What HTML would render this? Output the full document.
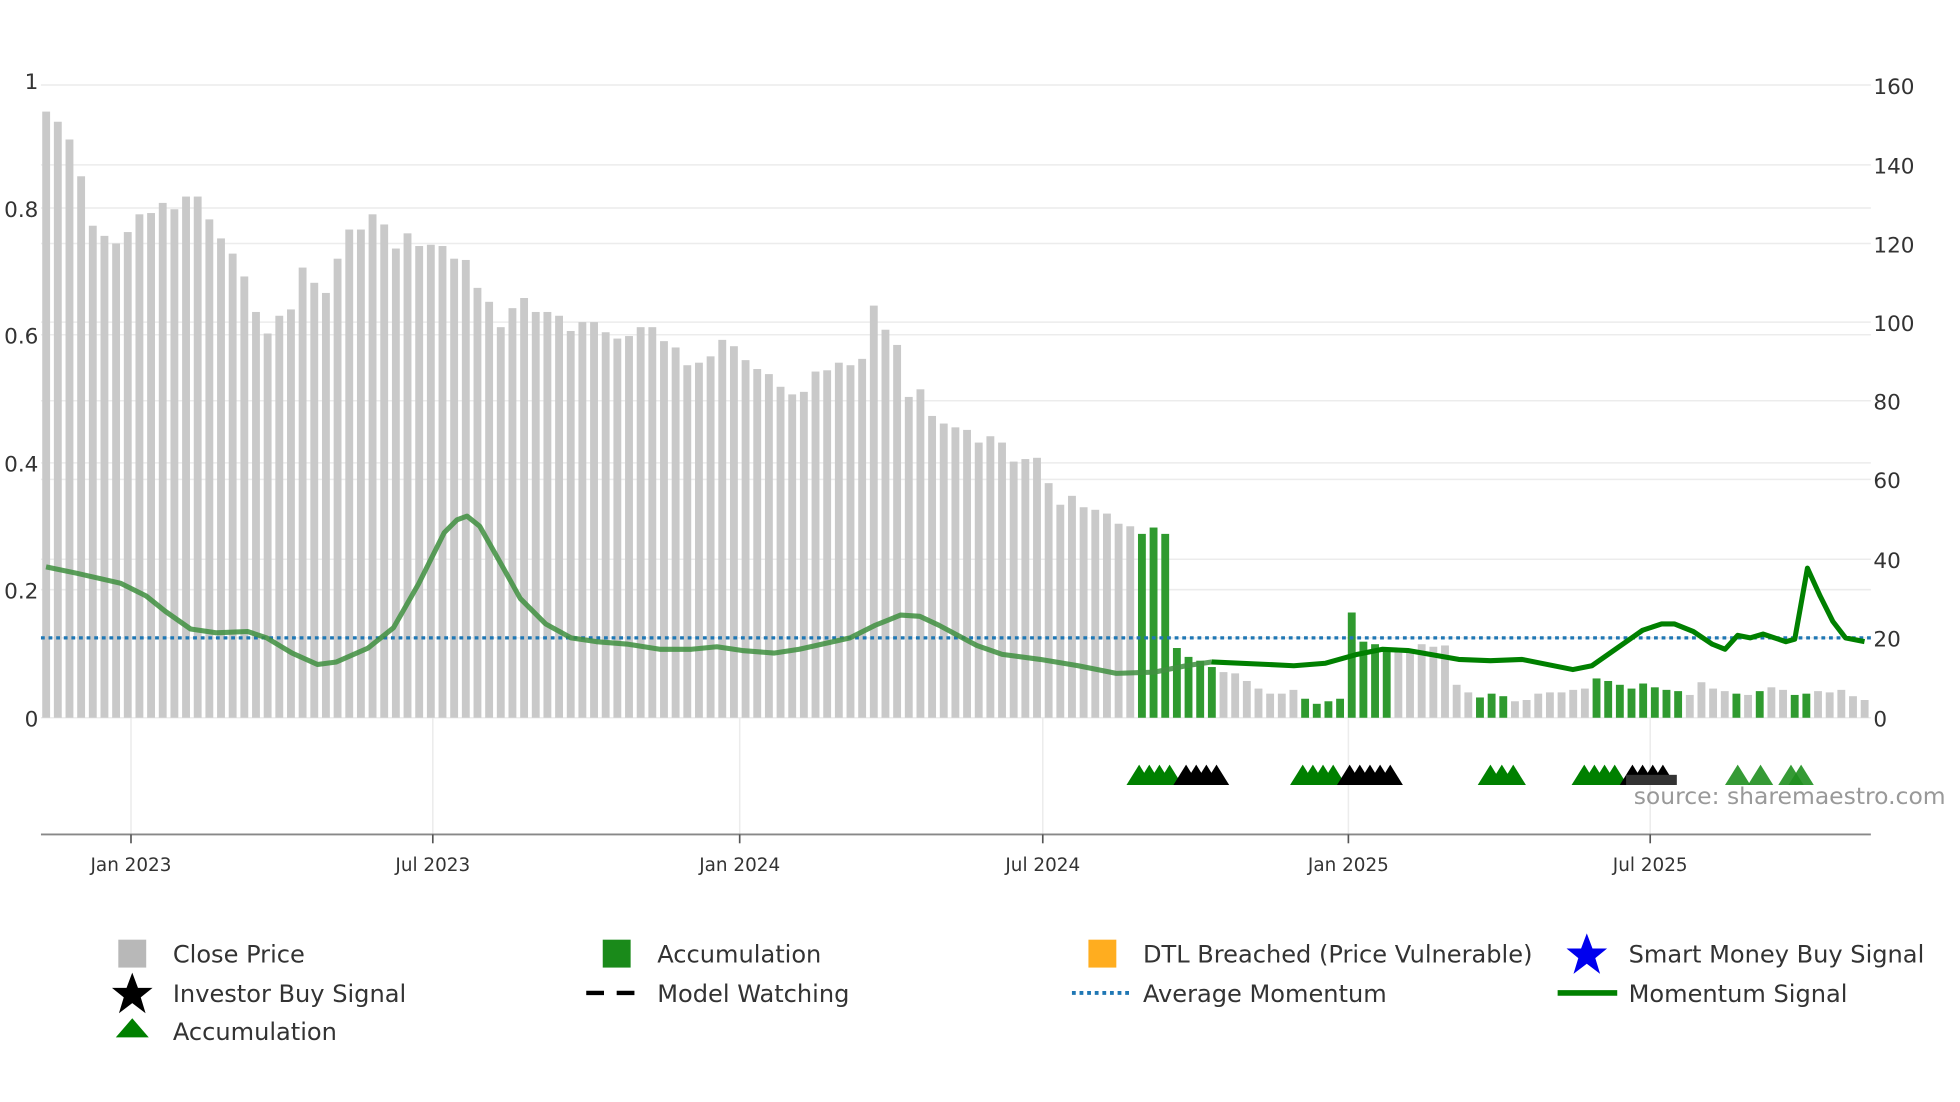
<!DOCTYPE html>
<html><head><meta charset="utf-8">
<style>
html,body{margin:0;padding:0;background:#fff;}
svg{display:block;}
text{font-family:"DejaVu Sans","Liberation Sans",sans-serif;}
</style></head>
<body>
<svg id="c" width="1960" height="1102" viewBox="0 0 1545 869" xmlns="http://www.w3.org/2000/svg">
<rect width="1545" height="869" fill="#fff"/>
<g id="grid" stroke="#ececec" stroke-width="1.2"></g>
<g id="bars"></g>
<line x1="32" y1="503" x2="1475" y2="503" stroke="#1f77b4" stroke-width="2.6" stroke-dasharray="3,3"/>
<path id="mom1" fill="none" stroke="#3f8f3f" stroke-opacity="0.85" stroke-width="4" stroke-linejoin="round"/>
<path id="mom2" fill="none" stroke="#008000" stroke-width="4" stroke-linejoin="round"/>
<g id="tri"></g>
<line x1="32" y1="658" x2="1475" y2="658" stroke="#888" stroke-width="1.5"/>
<g id="ticks" stroke="#555" stroke-width="1.3"></g>
<g font-size="17" fill="#333">
<text x="30" y="70" text-anchor="end">1</text>
<text x="30" y="171" text-anchor="end">0.8</text>
<text x="30" y="271" text-anchor="end">0.6</text>
<text x="30" y="372" text-anchor="end">0.4</text>
<text x="30" y="472" text-anchor="end">0.2</text>
<text x="30" y="573" text-anchor="end">0</text>
<text x="1477" y="74">160</text>
<text x="1477" y="137">140</text>
<text x="1477" y="199">120</text>
<text x="1477" y="261">100</text>
<text x="1477" y="323">80</text>
<text x="1477" y="385">60</text>
<text x="1477" y="448">40</text>
<text x="1477" y="510">20</text>
<text x="1477" y="573">0</text>
</g>
<g font-size="14.5" fill="#333" text-anchor="middle">
<text x="103" y="687">Jan 2023</text>
<text x="341" y="687">Jul 2023</text>
<text x="583" y="687">Jan 2024</text>
<text x="822" y="687">Jul 2024</text>
<text x="1063" y="687">Jan 2025</text>
<text x="1301" y="687">Jul 2025</text>
</g>
<text x="1288" y="634" font-size="18.5" fill="#999">source: sharemaestro.com</text>
<g font-size="19" fill="#333">
<rect x="93" y="741" width="22" height="22" fill="#b8b8b8"/>
<text x="136" y="759">Close Price</text>
<rect x="475" y="741" width="22" height="22" fill="#1a8a1a"/>
<text x="518" y="759">Accumulation</text>
<rect x="858" y="741" width="22" height="22" fill="#ffad1f"/>
<text x="901" y="759">DTL Breached (Price Vulnerable)</text>
<polygon points="1251,736 1255.5,748 1267,748 1257.7,755.5 1261.5,768 1251,760 1240.5,768 1244.3,755.5 1235,748 1246.5,748" fill="#0000ee"/>
<text x="1284" y="759">Smart Money Buy Signal</text>
<polygon points="104,767 108.5,779 120,779 110.7,786.5 114.5,799 104,791 93.5,799 97.3,786.5 88,779 99.5,779" fill="#000"/>
<text x="136" y="790">Investor Buy Signal</text>
<line x1="462" y1="783" x2="507" y2="783" stroke="#000" stroke-width="3.5" stroke-dasharray="14,10"/>
<text x="518" y="790">Model Watching</text>
<line x1="845" y1="783" x2="890" y2="783" stroke="#1f77b4" stroke-width="3" stroke-dasharray="3,3"/>
<text x="901" y="790">Average Momentum</text>
<line x1="1228" y1="783" x2="1275" y2="783" stroke="#008000" stroke-width="4.5"/>
<text x="1284" y="790">Momentum Signal</text>
<polygon points="104,803 117,818 91,818" fill="#008000"/>
<text x="136" y="820">Accumulation</text>
</g>
</svg>
<script>
var NS="http://www.w3.org/2000/svg";
function el(p,t,a){var e=document.createElementNS(NS,t);for(var k in a)e.setAttribute(k,a[k]);document.getElementById(p).appendChild(e);return e;}
[67,130,192,254,316,378,441,503,566,164,264,365,465].forEach(function(y){el("grid","line",{x1:32,x2:1475,y1:y,y2:y});});
[103,341,583,822,1063,1301].forEach(function(x){el("grid","line",{x1:x,x2:x,y1:566,y2:658});el("ticks","line",{x1:x,x2:x,y1:658,y2:665});});
var tops=[88,96,110,139,178,186,192,183,169,168,160,165,155,155,173,188,200,218,246,263,249,244,211,223,231,204,181,181,169,177,196,184,194,193,194,204,205,227,238,258,243,235,246,246,249,261,254,254,262,267,265,258,258,269,274,288,286,281,268,273,284,291,295,305,311,309,293,292,286,288,283,241,260,272,313,307,328,334,337,339,349,344,349,364,362,361,381,398,391,400,402,405,413,415,421,416,421,511,518,521,526,530,531,537,543,547,547,544,551,555,553,551,483,506,508,512,513,512,508,510,509,540,546,550,547,549,553,552,547,546,546,544,543,535,537,540,543,539,542,544,545,548,538,543,545,547,548,545,542,544,548,547,545,546,544,549,552];
var green={};[94,95,96,97,98,99,100,108,109,110,111,112,113,114,115,123,124,125,133,134,135,136,137,138,139,140,145,147,150,151].forEach(function(i){green[i]=1;});
var step=(1470-36)/(tops.length-1);
tops.forEach(function(t,i){var x=36+i*step;el("bars","rect",{x:x-3,y:t,width:6.2,height:566-t,fill:green[i]?"#2f9a2f":"#c9c9c9"});});
var pts=[[36,447],[60,452],[95,460],[115,470],[130,482],[150,496],[170,499],[195,498],[210,503],[230,515],[250,524],[265,522],[290,511],[310,495],[330,460],[350,420],[360,410],[368,407],[378,415],[395,445],[410,472],[430,492],[450,503],[470,506],[495,508],[520,512],[545,512],[565,510],[585,513],[610,515],[630,512],[670,503],[690,493],[710,485],[725,486],[740,493],[770,509],[790,516],[820,520],[850,525],[880,531],[910,530],[935,525],[955,522],[1000,524],[1020,525],[1045,523],[1070,516],[1090,512],[1110,513],[1150,520],[1175,521],[1200,520],[1240,528],[1255,525],[1275,511],[1295,497],[1310,492],[1320,492],[1335,498],[1350,508],[1360,512],[1370,501],[1380,503],[1390,500],[1408,506],[1415,504],[1425,448],[1435,470],[1445,490],[1455,503],[1470,506]];
function P(a){return "M"+a.map(function(p){return p[0]+","+p[1];}).join(" L");}
var i1=pts.findIndex(function(p){return p[0]>=955;});
document.getElementById("mom1").setAttribute("d",P(pts.slice(0,i1+1)));
document.getElementById("mom2").setAttribute("d",P(pts.slice(i1)));
function tri(x,c,o){el("tri","polygon",{points:(x)+",603 "+(x+10)+",619 "+(x-10)+",619",fill:c,"fill-opacity":o||1});}
[898,906,914,922].forEach(function(x){tri(x,"#008000");});
[935,943,951,959].forEach(function(x){tri(x,"#000");});
[1027,1035,1043,1051].forEach(function(x){tri(x,"#008000");});
[1064,1072,1080,1088,1096].forEach(function(x){tri(x,"#000");});
[1175,1184,1193].forEach(function(x){tri(x,"#008000");});
[1249,1257,1265,1273].forEach(function(x){tri(x,"#008000");});
[1287,1295,1303,1311].forEach(function(x){tri(x,"#000");});
el("tri","rect",{x:1282,y:611,width:40,height:8,fill:"#333"});
[1370,1388,1412,1420].forEach(function(x){tri(x,"#1f8f1f",0.9);});
</script>
</body></html>
